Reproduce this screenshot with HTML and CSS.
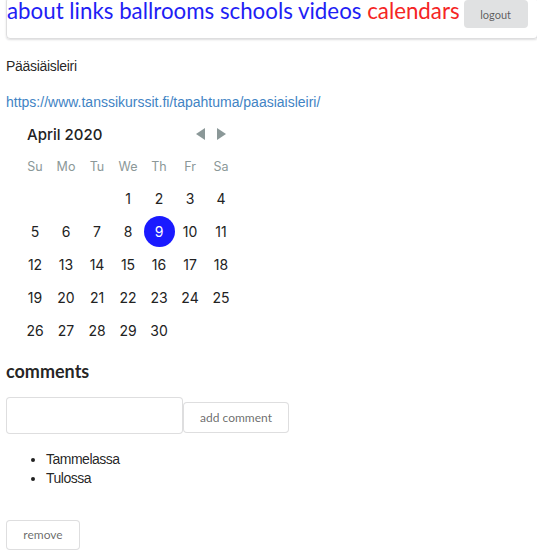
FILE: index.html
```html
<!DOCTYPE html>
<html>
<head>
<meta charset="utf-8">
<link rel="stylesheet" href="styles.css">
</head>
<body>
<nav class="menu">
  <span class="nav-links">
    <a class="nav-link">about</a>
    <a class="nav-link">links</a>
    <a class="nav-link">ballrooms</a>
    <a class="nav-link">schools</a>
    <a class="nav-link">videos</a>
    <a class="nav-link active">calendars</a>
  </span>
  <button class="btn btn-grey">logout</button>
</nav>

<p class="event-title">Pääsiäisleiri</p>
<p class="event-url"><a href="#">https://www.tanssikurssit.fi/tapahtuma/paasiaisleiri/</a></p>

<div class="calendar">
  <div class="cal-head">
    <span class="cal-caption">April 2020</span>
    <span class="cal-nav">
      <svg width="9" height="12" viewBox="0 0 9 12"><polygon points="9,0 9,12 0,6" fill="#8b9898"/></svg>
      <svg width="9" height="12" viewBox="0 0 9 12"><polygon points="0,0 0,12 9,6" fill="#8b9898"/></svg>
    </span>
  </div>
  <div class="cal-grid">
    <span class="wd">Su</span><span class="wd">Mo</span><span class="wd">Tu</span><span class="wd">We</span><span class="wd">Th</span><span class="wd">Fr</span><span class="wd">Sa</span>
    <span></span><span></span><span></span>
    <span class="day">1</span><span class="day">2</span><span class="day">3</span><span class="day">4</span>
    <span class="day">5</span><span class="day">6</span><span class="day">7</span><span class="day">8</span><span class="day selected">9</span><span class="day">10</span><span class="day">11</span>
    <span class="day">12</span><span class="day">13</span><span class="day">14</span><span class="day">15</span><span class="day">16</span><span class="day">17</span><span class="day">18</span>
    <span class="day">19</span><span class="day">20</span><span class="day">21</span><span class="day">22</span><span class="day">23</span><span class="day">24</span><span class="day">25</span>
    <span class="day">26</span><span class="day">27</span><span class="day">28</span><span class="day">29</span><span class="day">30</span>
  </div>
</div>

<h3 class="comments-title">comments</h3>
<div class="comment-form">
  <input class="comment-input" type="text">
  <button class="btn btn-basic btn-add">add comment</button>
</div>
<ul class="comment-list">
  <li>Tammelassa</li>
  <li>Tulossa</li>
</ul>
<button class="btn btn-basic btn-remove">remove</button>
</body>
</html>
```

FILE: styles.css
```css
html, body {
  margin: 0;
  padding: 0;
}
body {
  padding: 0 6px;
  font-family: "Liberation Sans", Arial, sans-serif;
  font-size: 14px;
  color: rgba(0,0,0,0.87);
  overflow: hidden;
  background: #fff;
}
.menu {
  display: flex;
  align-items: flex-start;
  gap: 4px;
  margin-top: -3px;
  margin-right: -7px;
  height: 42px;
  box-sizing: border-box;
  border: 1px solid rgba(34,36,38,0.15);
  box-shadow: 0 1px 2px 0 rgba(34,36,38,0.15);
  border-radius: 4px;
  font-family: Lato, sans-serif;
}
.nav-links {
  font-size: 22.3px;
  line-height: 1;
  margin-top: 2px;
  white-space: nowrap;
}
.nav-link {
  color: #1e1ef5;
  text-decoration: none;
}
.nav-link.active {
  color: #f52525;
}
.btn {
  font-family: Lato, sans-serif;
  border: none;
  border-radius: 4px;
  cursor: pointer;
  line-height: 1;
}
.btn-grey {
  margin-top: 2px;
  background: #e0e1e2;
  color: rgba(0,0,0,0.6);
  font-size: 11px;
  height: 28px;
  width: 64px;
  padding: 0;
}
.event-title {
  margin: 19px 0 0;
  line-height: 16px;
  letter-spacing: -0.3px;
}
.event-url {
  margin: 20px 0 0;
  line-height: 16px;
}
.event-url a {
  color: #4183c4;
  text-decoration: none;
}
.calendar {
  width: 217px;
  padding: 0 0 0 13.5px;
  margin-top: 12px;
  font-family: Inter, sans-serif;
}
.cal-head {
  display: flex;
  justify-content: space-between;
  align-items: center;
  height: 24px;
  padding-left: 7.5px;
  padding-right: 10.5px;
}
.cal-caption {
  font-size: 15px;
  font-weight: 500;
  color: #222;
}
.cal-nav {
  display: flex;
  gap: 12px;
}
.cal-grid {
  display: grid;
  grid-template-columns: repeat(7, 31px);
  grid-template-rows: 31px;
  grid-auto-rows: 33px;
  margin-top: 5px;
}
.cal-grid > span {
  display: flex;
  align-items: center;
  justify-content: center;
}
.wd {
  font-size: 12.5px;
  color: #8b9898;
}
.day {
  font-size: 14px;
  color: #222;
}
.day.selected {
  width: 31px;
  height: 31px;
  border-radius: 50%;
  background: #1a1aff;
  color: #fff;
  align-self: center;
}
.comments-title {
  font-family: Lato, sans-serif;
  font-size: 18px;
  font-weight: 700;
  margin: 13px 0 0;
  line-height: 22px;
}
.comment-form {
  display: flex;
  align-items: flex-end;
  margin-top: 15px;
}
.comment-input {
  width: 177px;
  height: 37px;
  box-sizing: border-box;
  border: 1px solid rgba(34,36,38,0.15);
  border-radius: 4px;
  font-family: Lato, sans-serif;
  font-size: 14px;
  padding: 0 14px;
  margin: 0;
  outline: none;
}
.btn-basic {
  background: #fff;
  box-shadow: inset 0 0 0 1px rgba(34,36,38,0.15);
  color: rgba(0,0,0,0.6);
  font-size: 12px;
  height: 31px;
  padding: 0 17px;
}
.btn-add {
  width: 106px;
  padding: 0;
  margin-bottom: 1px;
}
.comment-list {
  margin: 16px 0 0;
  padding-left: 40px;
  line-height: 19px;
  letter-spacing: -0.5px;
}
.btn-remove {
  margin-top: 32px;
  height: 30px;
  width: 74px;
  padding: 0;
}
```
